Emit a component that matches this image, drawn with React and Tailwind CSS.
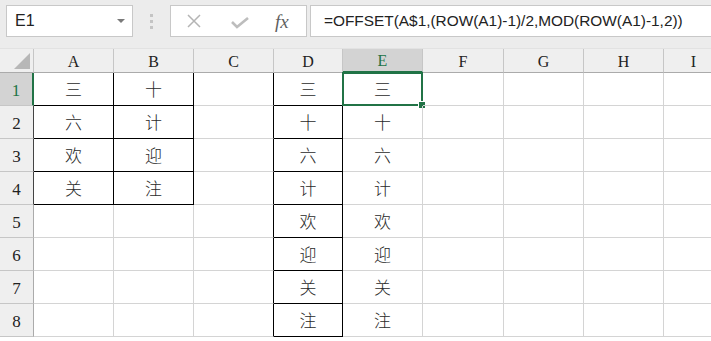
import React from "react";

const cols = [
  { k: "A", w: "w-[80px]" },
  { k: "B", w: "w-[80px]" },
  { k: "C", w: "w-[80px]" },
  { k: "D", w: "w-[69px]" },
  { k: "E", w: "w-[80px]" },
  { k: "F", w: "w-[81px]" },
  { k: "G", w: "w-[80px]" },
  { k: "H", w: "w-[80px]" },
  { k: "I", w: "w-[60px]" },
];

const colA = ["三", "六", "欢", "关"];
const colB = ["十", "计", "迎", "注"];
const colD = ["三", "十", "六", "计", "欢", "迎", "关", "注"];

const value = (r, c) => {
  if (c === 0) return colA[r] || "";
  if (c === 1) return colB[r] || "";
  if (c === 3 || c === 4) return colD[r] || "";
  return "";
};

// cells with a thin black border
const boxed = (r, c) => {
  if (r < 0 || c < 0 || r > 7) return false;
  if ((c === 0 || c === 1) && r < 4) return true;
  if (c === 3) return true;
  return false;
};

const cellFont = { fontFamily: '"Noto Sans CJK SC", sans-serif' };

export default function App() {
  return (
    <div className="w-[711px] h-[341px] overflow-hidden bg-white select-none">
      {/* Formula bar */}
      <div className="h-[48px] bg-[#ececec] flex items-start pt-[5px] pl-[6px]">
        <div className="w-[127px] shrink-0 h-[32px] bg-white border border-[#c8c8c8] flex items-center justify-between pl-[8px] pr-[7px]">
          <span className="text-[16px] text-[#222]" style={{ fontFamily: '"Liberation Sans", sans-serif' }}>E1</span>
          <svg width="8" height="5" viewBox="0 0 8 5"><path d="M0 0 H8 L4 4 Z" fill="#7a7a7a" /></svg>
        </div>
        <div className="w-[37px] shrink-0 h-[32px] flex flex-col items-center justify-center gap-[3px]">
          <div className="w-[3px] h-[3px] bg-[#c4c4c4]" />
          <div className="w-[3px] h-[3px] bg-[#c4c4c4]" />
          <div className="w-[3px] h-[3px] bg-[#c4c4c4]" />
        </div>
        <div className="w-[137px] shrink-0 h-[32px] bg-white border border-[#c8c8c8] flex items-center pl-[15px]">
          <svg width="16" height="16" viewBox="0 0 16 16">
            <path d="M2 2 L14 14 M14 2 L2 14" stroke="#b4b4b4" strokeWidth="1.5" />
          </svg>
          <svg className="ml-[29px] mt-[4px]" width="18" height="12" viewBox="0 0 18 12">
            <path d="M1 5 L6 10 L17 1" stroke="#bdbdbd" strokeWidth="2.6" fill="none" />
          </svg>
          <span className="ml-[26px] italic text-[19px] text-[#5f5f5f] leading-none" style={{ fontFamily: '"Liberation Serif", serif' }}>fx</span>
        </div>
        <div className="ml-[3px] flex-1 h-[32px] bg-white border border-[#c8c8c8] border-r-0 flex items-center pl-[13px]">
          <span className="text-[15.4px] text-[#222] whitespace-nowrap" style={{ fontFamily: '"Liberation Sans", sans-serif' }}>
            =OFFSET(A$1,(ROW(A1)-1)/2,MOD(ROW(A1)-1,2))
          </span>
        </div>
      </div>

      {/* Column headers */}
      <div className="flex h-[25px] bg-[#efefef] border-t border-[#e2e2e2]" style={{ fontFamily: '"Liberation Serif", serif' }}>
        <div className="w-[34px] shrink-0 h-full border-r border-[#c6c6c6] border-b border-b-[#ababab] relative">
          <svg className="absolute right-[3px] bottom-[3px]" width="16" height="16" viewBox="0 0 16 16">
            <path d="M16 0 V16 H0 Z" fill="#b7b7b7" />
          </svg>
        </div>
        {cols.map((col, c) => (
          <div
            key={col.k}
            className={
              col.w +
              " shrink-0 h-full flex items-center justify-center pt-[2px] text-[16px] border-r border-[#c6c6c6] " +
              (c === 4
                ? "bg-[#d3d3d3] text-[#217346] border-b-2 border-b-[#217346]"
                : "text-[#222] border-b border-b-[#ababab]")
            }
          >
            {col.k}
          </div>
        ))}
      </div>

      {/* Rows */}
      {Array.from({ length: 8 }).map((_, r) => (
        <div key={r} className="flex h-[33px]">
          <div
            className={
              "w-[34px] shrink-0 h-full flex items-end justify-center pb-[2px] text-[17px] border-b border-[#c6c6c6] " +
              (r === 0
                ? "bg-[#d3d3d3] text-[#217346] border-r-2 border-r-[#217346]"
                : "bg-[#efefef] text-[#222] border-r " + (r < 4 ? "border-r-[#444]" : "border-r-[#ababab]"))
            }
            style={{ fontFamily: '"Liberation Serif", serif' }}
          >
            {r + 1}
          </div>
          {cols.map((col, c) => {
            const rightBlack = boxed(r, c) || boxed(r, c + 1);
            const bottomBlack = boxed(r, c) || boxed(r + 1, c);
            const selected = r === 0 && c === 4;
            return (
              <div
                key={col.k}
                className={
                  col.w +
                  " shrink-0 h-full relative flex items-center justify-center text-[17px] font-light text-[#2a2a2a] border-r border-b " +
                  (rightBlack ? "border-r-black " : "border-r-[#d4d4d4] ") +
                  (bottomBlack ? "border-b-black" : "border-b-[#d4d4d4]")
                }
                style={cellFont}
              >
                {value(r, c)}
                {selected && (
                  <div className="absolute -left-[1px] -top-[1px] -right-[1px] -bottom-[1px] border-2 border-[#217346]">
                    <div className="absolute -right-[5px] -bottom-[5px] w-[8px] h-[8px] bg-[#217346] border border-white" />
                  </div>
                )}
              </div>
            );
          })}
        </div>
      ))}
    </div>
  );
}
